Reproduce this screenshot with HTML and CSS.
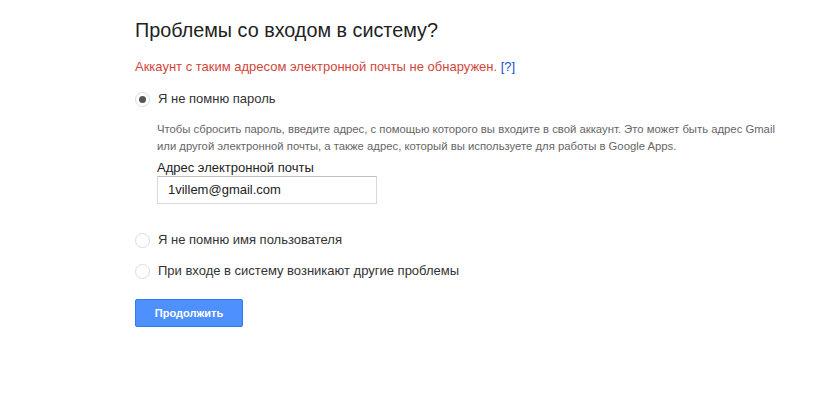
FILE: index.html
```html
<!DOCTYPE html>
<html lang="ru">
<head>
<meta charset="utf-8">
<link rel="stylesheet" href="styles.css">
</head>
<body>
<div class="page">
  <h1 class="title">Проблемы со входом в систему?</h1>
  <p class="error">Аккаунт с таким адресом электронной почты не обнаружен. <a class="help" href="#">[?]</a></p>
  <div class="option">
    <span class="radio checked"></span>
    <span class="opt-label">Я не помню пароль</span>
  </div>
  <div class="details">
    <p class="desc">Чтобы сбросить пароль, введите адрес, с помощью которого вы входите в свой аккаунт. Это может быть адрес Gmail или другой электронной почты, а также адрес, который вы используете для работы в Google Apps.</p>
    <div class="field-label">Адрес электронной почты</div>
    <div class="input">1villem@gmail.com</div>
  </div>
  <div class="option opt2">
    <span class="radio"></span>
    <span class="opt-label">Я не помню имя пользователя</span>
  </div>
  <div class="option opt3">
    <span class="radio"></span>
    <span class="opt-label">При входе в систему возникают другие проблемы</span>
  </div>
  <button class="btn">Продолжить</button>
</div>
</body>
</html>
```
FILE: styles.css
```css
html, body {
  margin: 0;
  padding: 0;
  background: #fff;
}
body {
  font-family: "Liberation Sans", Arial, sans-serif;
  color: #222;
}
.page {
  padding: 14px 0 0 135px;
  display: flex;
  flex-direction: column;
  align-items: flex-start;
}
.title {
  margin: 0;
  font-size: 19.8px;
  font-weight: normal;
  line-height: 32px;
  color: #222;
}
.error {
  margin: 13px 0 0;
  font-size: 13px;
  line-height: 16px;
  color: #d1463a;
}
.help {
  color: #15c;
  text-decoration: none;
}
.option {
  display: flex;
  align-items: center;
  gap: 8px;
  margin-top: 16px;
  font-size: 13px;
  line-height: 16px;
  color: #333;
}
.radio {
  width: 13px;
  height: 13px;
  border: 1px solid #dcdcdc;
  border-radius: 50%;
  display: flex;
  align-items: center;
  justify-content: center;
  background: #fff;
}
.radio.checked::after {
  content: "";
  width: 7px;
  height: 7px;
  border-radius: 50%;
  background: #555;
}
.details {
  padding-left: 22px;
  display: flex;
  flex-direction: column;
  align-items: flex-start;
}
.desc {
  margin: 14px 0 0;
  width: 625px;
  font-size: 11.3px;
  line-height: 17px;
  color: #666;
}
.field-label {
  margin-top: 5px;
  font-size: 13px;
  line-height: 16px;
  color: #222;
}
.input {
  margin-top: 0;
  width: 208px;
  height: 26px;
  border: 1px solid #d9d9d9;
  border-top-color: #c0c0c0;
  padding: 0 0 0 10px;
  font-size: 13px;
  line-height: 26px;
  color: #222;
}
.opt2 {
  margin-top: 28px;
}
.opt3 {
  margin-top: 15px;
}
.btn {
  margin-top: 20px;
  width: 108px;
  height: 28px;
  border: 1px solid #3079ed;
  border-radius: 2px;
  background: #4d90fe;
  color: #fff;
  font-family: "Liberation Sans", Arial, sans-serif;
  font-size: 11px;
  font-weight: bold;
  padding: 0;
}
```
